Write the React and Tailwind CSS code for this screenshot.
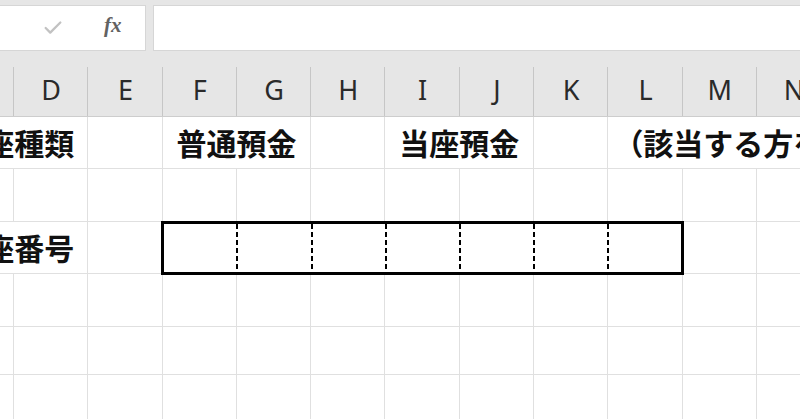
import React from 'react';
import { Check } from 'lucide-react';

const COLS = ['D', 'E', 'F', 'G', 'H', 'I', 'J', 'K', 'L', 'M', 'N'];
const jp = "font-['Noto_Sans_CJK_JP',sans-serif]";

const Cell = ({ className = '', children }) => (
  <div className={`h-full shrink-0 border-r border-b border-[#e0e0e0] ${className}`}>{children}</div>
);

// plain row: partial column C, then D..N
const EmptyRow = ({ h }) => (
  <div className={`flex ${h}`}>
    <Cell className="w-[14px]" />
    {COLS.map((c) => (
      <Cell key={c} className="w-[74.3px]" />
    ))}
  </div>
);

const App = () => {
  return (
    <div className="w-[800px] h-[419px] overflow-hidden bg-white">
      {/* Formula bar */}
      <div className="h-[55px] bg-[#e6e6e6] flex gap-[7px] pt-[5px] pb-[4px]">
        <div className="w-[146px] bg-white border border-[#d6d6d6] border-l-0 flex items-center">
          <Check className="ml-[42px] w-[22px] h-[22px] text-[#c2c2c2]" strokeWidth={2.5} />
          <span className="ml-[40px] font-['Liberation_Serif',serif] italic font-bold text-[21px] text-[#626262] -mt-[4px]">fx</span>
        </div>
        <div className="flex-1 bg-white border border-[#d6d6d6] border-r-0" />
      </div>

      {/* Column headers */}
      <div className="flex h-[62px] bg-[#e6e6e6] border-b border-[#cdcdcd] font-['Noto_Sans',sans-serif] text-[27px] text-[#2a2a2a]">
        <div className="w-[14px] shrink-0 relative after:absolute after:right-0 after:top-[12px] after:bottom-0 after:w-px after:bg-[#c6c6c6]" />
        {COLS.map((c) => (
          <div
            key={c}
            className="w-[74.3px] shrink-0 relative flex items-center justify-center pt-[10px] after:absolute after:right-0 after:top-[12px] after:bottom-0 after:w-px after:bg-[#c6c6c6]"
          >
            {c}
          </div>
        ))}
      </div>

      <div className={`${jp} font-bold text-[30px] text-[#111]`}>
        {/* Row 1: account type */}
        <div className="flex h-[52px]">
          <Cell className="w-[88.3px] flex items-center justify-end pr-[13px] whitespace-nowrap overflow-hidden">口座種類</Cell>
          <Cell className="w-[74.3px]" />
          <Cell className="w-[148.6px] flex items-center justify-center whitespace-nowrap">普通預金</Cell>
          <Cell className="w-[74.3px]" />
          <Cell className="w-[148.6px] flex items-center justify-center whitespace-nowrap">当座預金</Cell>
          <Cell className="w-[74.3px]" />
          <Cell className="w-[222.9px] flex items-center pl-[5px] whitespace-nowrap">（該当する方を〇で囲む）</Cell>
        </div>

        <EmptyRow h="h-[53px]" />

        {/* Row 3: account number */}
        <div className="flex h-[52px]">
          <Cell className="w-[88.3px] flex items-center justify-end pr-[13px] whitespace-nowrap overflow-hidden">口座番号</Cell>
          <Cell className="w-[74.3px]" />
          <div className="relative z-10 shrink-0 -ml-[1.5px] -mt-px h-[54px] w-[523.4px] border-[3px] border-black flex">
            {[0, 1, 2, 3, 4, 5].map((i) => (
              <React.Fragment key={i}>
                <div className="flex-1" />
                <div className="w-[2px] shrink-0 bg-[repeating-linear-gradient(to_bottom,#000_0_5px,transparent_5px_8px)]" />
              </React.Fragment>
            ))}
            <div className="flex-1" />
          </div>
          <Cell className="w-[74.3px] -ml-[1.5px]" />
          <Cell className="w-[74.3px]" />
        </div>

        <EmptyRow h="h-[53px]" />
        <EmptyRow h="h-[48px]" />
        <EmptyRow h="h-[48px]" />
      </div>
    </div>
  );
};

export default App;
